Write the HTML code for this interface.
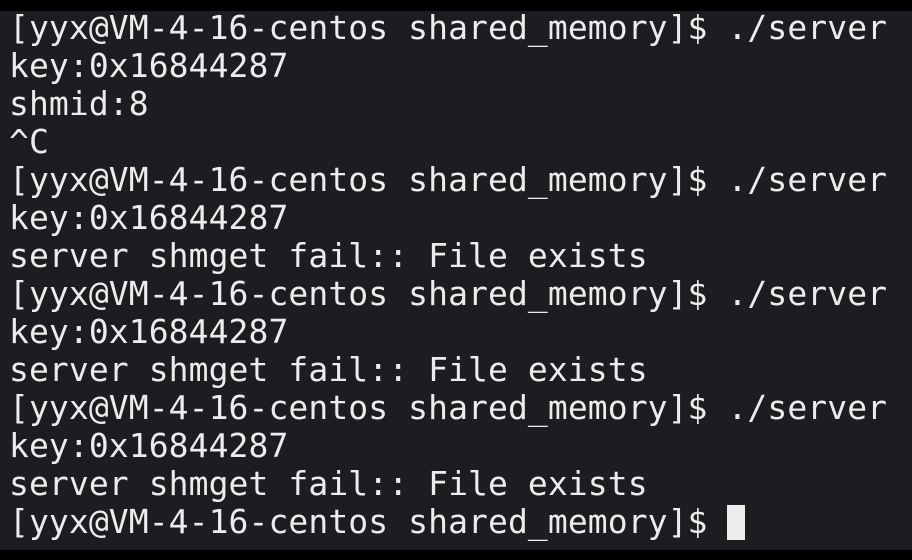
<!DOCTYPE html>
<html><head><style>
html,body{margin:0;padding:0;width:912px;height:560px;overflow:hidden;background:#000;}
.t{position:absolute;left:0;top:11px;width:912px;height:539px;background:#1c1d20;}
pre{position:absolute;left:9px;top:-2px;margin:0;font-family:"DejaVu Sans Mono","Liberation Mono",monospace;font-size:33px;line-height:38px;color:#ececec;letter-spacing:0.09px;}
.c{display:inline-block;width:18px;height:35px;background:#ececec;vertical-align:-7px;}
</style></head><body><div class="t"><pre>[yyx@VM-4-16-centos shared_memory]$ ./server
key:0x16844287
shmid:8
^C
[yyx@VM-4-16-centos shared_memory]$ ./server
key:0x16844287
server shmget fail:: File exists
[yyx@VM-4-16-centos shared_memory]$ ./server
key:0x16844287
server shmget fail:: File exists
[yyx@VM-4-16-centos shared_memory]$ ./server
key:0x16844287
server shmget fail:: File exists
[yyx@VM-4-16-centos shared_memory]$ <span class="c"></span></pre></div></body></html>
